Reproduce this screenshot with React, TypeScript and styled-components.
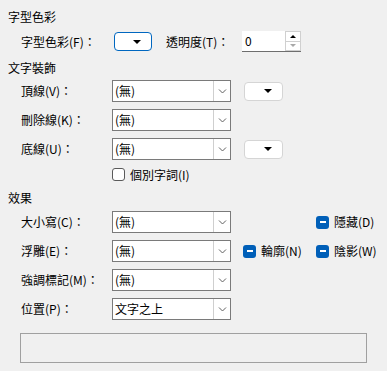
import styled, { createGlobalStyle } from 'styled-components';

const GlobalStyle = createGlobalStyle`
  html, body {
    margin: 0;
    padding: 0;
    background: #f0f0f0;
  }
  body {
    font-family: "Noto Sans CJK TC", "Noto Sans", sans-serif;
    font-size: 12px;
    color: #000;
  }
`

const Page = styled.div`
  width: 387px;
  height: 371px;
  padding: 9px 0 0 8px;
  box-sizing: border-box;
  display: flex;
  flex-direction: column;
`

const SectionTitle = styled.div<{ $top?: number }>`
  height: 16px;
  line-height: 16px;
  margin-top: ${props => props.$top ?? 0}px;
`

const Grid = styled.div<{ $top: number }>`
  display: grid;
  grid-template-columns: 91px 119px 73px auto;
  grid-auto-rows: 22px;
  row-gap: 7px;
  padding-left: 13px;
  margin-top: ${props => props.$top}px;
  align-items: center;
`

const Label = styled.span<{ $width?: number; $left?: number }>`
  line-height: 16px;
  white-space: nowrap;
  ${props => props.$width ? `width: ${props.$width}px; flex-shrink: 0;` : ''}
  margin-left: ${props => props.$left ?? 0}px;
`

const ColorRow = styled.div`
  display: flex;
  align-items: center;
  height: 21px;
  padding-left: 13px;
  margin-top: 6px;
`

const Combo = styled.div`
  height: 22px;
  box-sizing: border-box;
  border: 1px solid #7a7a7a;
  background: #fff;
  display: flex;
  align-items: center;
`

const ComboText = styled.span`
  flex: 1;
  padding-left: 2px;
  line-height: 16px;
`

const ComboArrow = styled.span`
  width: 17px;
  height: 20px;
  box-sizing: border-box;
  border-left: 1px solid #cfcfcf;
  display: flex;
  align-items: center;
  justify-content: center;
`

const ColorButton = styled.div<{ $focused?: boolean; $offset?: number }>`
  width: ${props => props.$focused ? 38 : 39}px;
  height: 19px;
  box-sizing: border-box;
  margin-left: ${props => props.$offset ?? 0}px;
  border: ${props => props.$focused ? '1.5px solid #0067c0' : '1px solid #d5d5d5'};
  border-radius: 4px;
  background: #fff;
  display: flex;
  align-items: center;
  justify-content: flex-end;
  padding-right: 10px;
`

const Caret = styled.span`
  width: 0;
  height: 0;
  border-left: 4px solid transparent;
  border-right: 4px solid transparent;
  border-top: 4px solid #000;
`

const Spin = styled.div`
  display: flex;
  height: 21px;
`

const SpinInput = styled.div`
  width: 43px;
  box-sizing: border-box;
  background: #fff;
  border-bottom: 1px solid #6e6e6e;
  padding-left: 3px;
  line-height: 20px;
`

const SpinButtons = styled.div`
  width: 16px;
  display: flex;
  flex-direction: column;
  background: #fff;
  border-bottom: 1px solid #6e6e6e;
`

const SpinButton = styled.div`
  flex: 1;
  box-sizing: border-box;
  border: 1px solid #d0d0d0;
  display: flex;
  align-items: center;
  justify-content: center;
  & + & {
    border-top: none;
  }
`

const Tri = styled.span<{ $down?: boolean; $disabled?: boolean }>`
  width: 0;
  height: 0;
  border-left: 3px solid transparent;
  border-right: 3px solid transparent;
  ${props => props.$down
    ? `border-top: 3px solid ${props.$disabled ? '#a8a8a8' : '#000'};`
    : `border-bottom: 3px solid ${props.$disabled ? '#a8a8a8' : '#000'};`}
`

const Check = styled.label<{ $left?: number }>`
  display: flex;
  align-items: center;
  gap: 5px;
  line-height: 16px;
  white-space: nowrap;
  margin-left: ${props => props.$left ?? 0}px;
`

const Box = styled.span<{ $mixed?: boolean }>`
  width: 13px;
  height: 13px;
  box-sizing: border-box;
  border-radius: 3px;
  border: ${props => props.$mixed ? 'none' : '1px solid #5a5a5a'};
  background: ${props => props.$mixed ? '#005fb8' : '#fff'};
  display: flex;
  align-items: center;
  justify-content: center;
  &::after {
    content: '';
    display: ${props => props.$mixed ? 'block' : 'none'};
    width: 6px;
    height: 2px;
    background: #fff;
  }
`

const CheckRow = styled.div`
  height: 13px;
  margin-top: 8px;
  padding-left: 104px;
  display: flex;
  align-items: center;
`

const Preview = styled.div`
  margin: 13px 0 0 12px;
  width: 347px;
  height: 30px;
  box-sizing: border-box;
  border: 1px solid #a0a0a0;
`

function Chevron() {
  return (
    <svg width="9" height="5" viewBox="0 0 9 5">
      <path d="M1 0.5 L4.5 4 L8 0.5" fill="none" stroke="#606060" strokeWidth="1" />
    </svg>
  );
}

function Dropdown({ value }: { value: string }) {
  return (
    <Combo>
      <ComboText>{value}</ComboText>
      <ComboArrow><Chevron /></ComboArrow>
    </Combo>
  );
}

function App() {
  return (
    <>
      <GlobalStyle />
      <Page>
        <SectionTitle>字型色彩</SectionTitle>
        <ColorRow>
          <Label $width={93}>字型色彩(F)：</Label>
          <ColorButton $focused><Caret /></ColorButton>
          <Label $width={76} $left={14}>透明度(T)：</Label>
          <Spin>
            <SpinInput>0</SpinInput>
            <SpinButtons>
              <SpinButton><Tri /></SpinButton>
              <SpinButton><Tri $down $disabled /></SpinButton>
            </SpinButtons>
          </Spin>
        </ColorRow>

        <SectionTitle $top={8}>文字裝飾</SectionTitle>
        <Grid $top={4}>
          <Label>頂線(V)：</Label>
          <Dropdown value="(無)" />
          <ColorButton $offset={13}><Caret /></ColorButton>
          <span />
          <Label>刪除線(K)：</Label>
          <Dropdown value="(無)" />
          <span />
          <span />
          <Label>底線(U)：</Label>
          <Dropdown value="(無)" />
          <ColorButton $offset={13}><Caret /></ColorButton>
          <span />
        </Grid>
        <CheckRow>
          <Check><Box />個別字詞(I)</Check>
        </CheckRow>

        <SectionTitle $top={9}>效果</SectionTitle>
        <Grid $top={5}>
          <Label>大小寫(C)：</Label>
          <Dropdown value="(無)" />
          <span />
          <Check $left={12}><Box $mixed />隱藏(D)</Check>
          <Label>浮雕(E)：</Label>
          <Dropdown value="(無)" />
          <Check $left={12}><Box $mixed />輪廓(N)</Check>
          <Check $left={12}><Box $mixed />陰影(W)</Check>
          <Label>強調標記(M)：</Label>
          <Dropdown value="(無)" />
          <span />
          <span />
          <Label>位置(P)：</Label>
          <Dropdown value="文字之上" />
          <span />
          <span />
        </Grid>
        <Preview />
      </Page>
    </>
  );
}

export default App;
